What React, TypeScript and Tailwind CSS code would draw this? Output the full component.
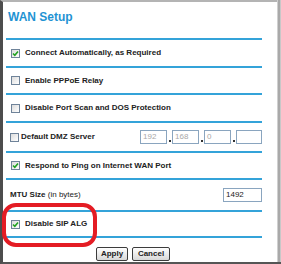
import React from "react";

const Check = ({ checked }: { checked?: boolean }) => {
  return (
    <span className="flex h-[9px] w-[9px] shrink-0 items-center justify-center border border-[#6f8399] bg-gradient-to-br from-[#dcdcdc] to-white">
      {checked && (
        <svg width="7" height="7" viewBox="0 0 7 7">
          <path d="M1 3.5 L2.8 5.3 L6 1.5" stroke="#21a121" strokeWidth="1.6" fill="none" />
        </svg>
      )}
    </span>
  );
};

const Line = () => <div className="mr-[15px] ml-[3px] h-[2px] bg-[#34a3d9]" />;

const Row = ({
  h,
  children,
}: {
  h: string;
  children: React.ReactNode;
}) => {
  return <div className={`flex items-center ${h}`}>{children}</div>;
};

const Field = ({ value, w, dim }: { value: string; w: string; dim?: boolean }) => {
  return (
    <span
      className={`flex h-[14px] items-center border border-[#8aa5bf] bg-white px-[2px] text-[8px] font-normal ${w} ${
        dim ? "text-[#a8a8a8]" : "text-[#222]"
      }`}
    >
      {value}
    </span>
  );
};

const Dot = () => (
  <span className="flex h-[14px] w-[5px] items-end justify-center pb-[2px]">
    <span className="h-[2px] w-[2px] bg-[#333]" />
  </span>
);

export default function App() {
  return (
    <div
      className="relative flex h-[264px] w-[281px] bg-white text-[8px] font-bold text-[#222]"
      style={{ fontFamily: '"Liberation Sans", Arial, sans-serif' }}
    >
      <div className="flex h-full w-[277px] flex-col border-t-2 border-b-2 border-l-[3px] border-t-[#b4b4b4] border-b-[#555] border-l-[#4d4d4d]">
        <div className="flex h-[36px] items-start pt-[6px] pl-[5px]">
          <span className="text-[12px] font-bold text-[#1f93d3]">WAN Setup</span>
        </div>
        <Line />
        <Row h="h-[26px]">
          <span className="ml-[8px] flex items-center gap-[5px]">
            <Check checked />
            Connect Automatically, as Required
          </span>
        </Row>
        <Line />
        <Row h="h-[25px]">
          <span className="ml-[8px] flex items-center gap-[5px]">
            <Check />
            Enable PPPoE Relay
          </span>
        </Row>
        <Line />
        <Row h="h-[26px]">
          <span className="ml-[8px] flex items-center gap-[5px]">
            <Check />
            Disable Port Scan and DOS Protection
          </span>
        </Row>
        <Line />
        <Row h="h-[28px]">
          <span className="ml-[7px] flex items-center gap-[2px]">
            <Check />
            Default DMZ Server
          </span>
          <span className="mr-[15px] ml-auto flex items-center">
            <Field value="192" w="w-[27px]" dim />
            <Dot />
            <Field value="168" w="w-[27px]" dim />
            <Dot />
            <Field value="0" w="w-[27px]" dim />
            <Dot />
            <Field value="" w="w-[26px]" />
          </span>
        </Row>
        <Line />
        <Row h="h-[25px]">
          <span className="ml-[8px] flex items-center gap-[5px]">
            <Check checked />
            Respond to Ping on Internet WAN Port
          </span>
        </Row>
        <Line />
        <Row h="h-[30px]">
          <span className="ml-[7px]">
            MTU Size <span className="font-normal">(in bytes)</span>
          </span>
          <span className="mr-[15px] ml-auto">
            <Field value="1492" w="w-[39px]" />
          </span>
        </Row>
        <Line />
        <Row h="h-[24px]">
          <span className="ml-[8px] flex items-center gap-[5px]">
            <Check checked />
            Disable SIP ALG
          </span>
        </Row>
        <Line />
        <div className="flex flex-1 items-start gap-[4px] pt-[9px] pl-[93px]">
          <button className="h-[14px] w-[32px] rounded-[2px] border border-[#3c3c3c] bg-gradient-to-b from-white to-[#d8d8d8] text-[8px] font-bold text-[#222]">
            Apply
          </button>
          <button className="h-[14px] w-[38px] rounded-[2px] border border-[#3c3c3c] bg-gradient-to-b from-white to-[#d8d8d8] text-[8px] font-bold text-[#222]">
            Cancel
          </button>
        </div>
      </div>
      <div className="flex h-full w-[4px] flex-col">
        <div className="flex flex-1">
          <div className="w-[1px] bg-[#d0d0d0]" />
          <div className="w-[2px] bg-[#a9a9a9]" />
          <div className="w-[1px] bg-[#c8c8c8]" />
        </div>
        <div className="h-[2px] bg-[#555]" />
      </div>
      <div className="absolute top-[203px] left-[2px] h-[44px] w-[95px] rounded-[14px] border-[4px] border-[#e41c24]" />
    </div>
  );
}
